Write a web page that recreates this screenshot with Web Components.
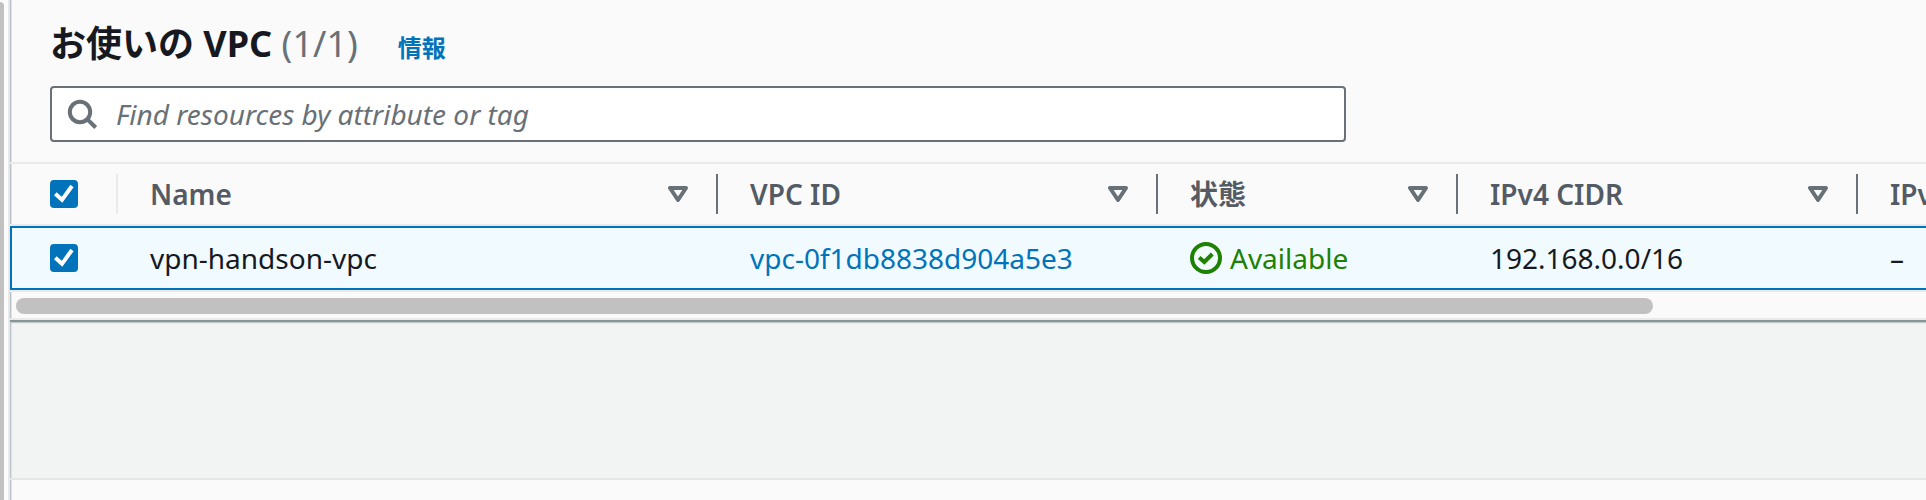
<!DOCTYPE html>
<html lang="ja">
<head>
<meta charset="utf-8">
<title>お使いの VPC</title>
<style>
  :root {
    --color-text: #16191f;
    --color-header: #545b64;
    --color-muted: #687078;
    --color-link: #0073bb;
    --color-success: #1d8102;
    --color-surface: #fafafa;
    --color-canvas: #f2f3f3;
    --color-hairline: #eaeaea;
    --color-selected: #f1faff;
    --color-thumb: #c1c1c1;
    --edge-shadow: linear-gradient(to right, #b8c2c8 1px, #dfe4e7 1px 2px, transparent 2px);
  }
  body {
    margin: 0;
    background: var(--color-canvas);
    color: var(--color-text);
    font-family: "Noto Sans", "Noto Sans CJK JP", sans-serif;
    font-size: 28px;
    line-height: 40px;
  }
</style>
</head>
<body>
<console-layout>
  <resource-panel>
    <panel-title slot="title" counter="(1/1)">お使いの VPC</panel-title>
    <search-field slot="filter" placeholder="Find resources by attribute or tag"></search-field>
    <vpc-table></vpc-table>
  </resource-panel>
  <split-panel slot="bottom"></split-panel>
</console-layout>

<script>
// <console-layout>: side navigation edge, main content and the bottom panel.
class ConsoleLayout extends HTMLElement {
  constructor() {
    super();
    this.attachShadow({ mode: "open" }).innerHTML = `
      <style>
        :host {
          display: grid;
          grid-template-columns: 10px minmax(0, 1fr);
          height: 100vh;
          overflow: hidden;
        }
        .nav {
          background: #fcfcfc;
          border-right: 2px solid var(--color-hairline);
          padding-top: 2px;
          box-sizing: border-box;
        }
        .nav-thumb {
          width: 4px;
          height: 100%;
          border-radius: 0 4px 0 0;
          background: var(--color-thumb);
        }
        main {
          display: flex;
          flex-direction: column;
          min-width: 0;
          background: var(--edge-shadow);
        }
        .spacer {
          flex: 1;
        }
      </style>
      <div class="nav"><div class="nav-thumb"></div></div>
      <main>
        <slot></slot>
        <div class="spacer"></div>
        <slot name="bottom"></slot>
      </main>
    `;
  }
}

class ResourcePanel extends HTMLElement {
  constructor() {
    super();
    this.attachShadow({ mode: "open" }).innerHTML = `
      <style>
        :host {
          display: block;
          background: var(--edge-shadow), var(--color-surface);
          border-bottom: 2px solid #879596;
          box-shadow: 0 1px 1px #c3cacb;
        }
        header {
          display: flex;
          flex-direction: column;
          gap: 18px;
          padding: 20px 40px;
          border-bottom: 2px solid var(--color-hairline);
        }
        .body {
          overflow: hidden;
        }
        .scrollbar {
          padding: 6px 6px 4px;
          border-bottom: 2px solid var(--color-hairline);
        }
        .thumb {
          width: 86%;
          height: 16px;
          border-radius: 8px;
          background: var(--color-thumb);
        }
      </style>
      <header>
        <slot name="title"></slot>
        <slot name="filter"></slot>
      </header>
      <div class="body"><slot></slot></div>
      <div class="scrollbar"><div class="thumb"></div></div>
    `;
  }
}

class PanelTitle extends HTMLElement {
  connectedCallback() {
    this.attachShadow({ mode: "open" }).innerHTML = `
      <style>
        :host {
          display: flex;
          align-items: baseline;
          gap: 40px;
        }
        h2 {
          margin: 0;
          font-size: 36px;
          line-height: 48px;
          font-weight: 700;
        }
        .counter {
          font-weight: 400;
          color: var(--color-muted);
        }
        a {
          font-size: 24px;
          line-height: 32px;
          font-weight: 700;
          color: var(--color-link);
          text-decoration: none;
        }
      </style>
      <h2><slot></slot> <span class="counter">${this.getAttribute("counter")}</span></h2>
      <a href="#info">情報</a>
    `;
  }
}

class SearchField extends HTMLElement {
  connectedCallback() {
    const placeholder = this.getAttribute("placeholder");
    this.attachShadow({ mode: "open" }).innerHTML = `
      <style>
        :host {
          display: block;
          max-width: 1296px;
        }
        label {
          display: flex;
          align-items: center;
          gap: 18px;
          padding: 6px 14px;
          background: #fff;
          border: 2px solid var(--color-muted);
          border-radius: 4px;
        }
        svg {
          flex: none;
          width: 32px;
          height: 32px;
          fill: none;
          stroke: var(--color-muted);
          stroke-width: 4;
        }
        input {
          flex: 1;
          min-width: 0;
          height: 40px;
          padding: 0;
          border: 0;
          outline: 0;
          background: none;
          color: inherit;
          font: inherit;
        }
        input::placeholder {
          color: var(--color-muted);
          font-style: italic;
        }
      </style>
      <label>
        <svg viewBox="0 0 32 32" aria-hidden="true">
          <circle cx="14" cy="14" r="10.200"/>
          <path d="M21 21l8.700 8.500"/>
        </svg>
        <input type="text" placeholder="${placeholder}" aria-label="${placeholder}">
      </label>
    `;
  }
}

// <check-box label="...">: tick box with the console's blue style.
class CheckBox extends HTMLElement {
  connectedCallback() {
    this.attachShadow({ mode: "open" }).innerHTML = `
      <style>
        :host {
          display: block;
          height: 28px;
        }
        label {
          display: grid;
          width: 28px;
          height: 28px;
        }
        input, svg {
          grid-area: 1 / 1;
          width: 28px;
          height: 28px;
          margin: 0;
        }
        input {
          appearance: none;
          box-sizing: border-box;
          border: 2px solid var(--color-muted);
          border-radius: 4px;
          background: #fff;
        }
        input:checked {
          border-color: var(--color-link);
          background: var(--color-link);
        }
        svg {
          fill: none;
          stroke: #fff;
          stroke-width: 4;
          pointer-events: none;
        }
        input:not(:checked) + svg {
          display: none;
        }
      </style>
      <label>
        <input type="checkbox" aria-label="${this.getAttribute("label")}" checked>
        <svg viewBox="0 0 28 28" aria-hidden="true"><path d="M5.300 13.800L12 19.800 22 6"/></svg>
      </label>
    `;
  }
}

class StatusIndicator extends HTMLElement {
  constructor() {
    super();
    this.attachShadow({ mode: "open" }).innerHTML = `
      <style>
        :host {
          display: flex;
          align-items: center;
          gap: 8px;
          color: var(--color-success);
        }
        svg {
          flex: none;
          width: 32px;
          height: 32px;
          fill: none;
          stroke: currentColor;
          stroke-width: 4;
        }
      </style>
      <svg viewBox="0 0 32 32" aria-hidden="true">
        <circle cx="16" cy="16" r="14"/>
        <path d="M9.200 15.500L14.300 20 22.300 12"/>
      </svg>
      <span><slot></slot></span>
    `;
  }
}

// <column-header>: heading text with the sort button at its right.
class ColumnHeader extends HTMLElement {
  connectedCallback() {
    this.attachShadow({ mode: "open" }).innerHTML = `
      <style>
        :host {
          display: flex;
          align-items: center;
          justify-content: space-between;
          height: 40px;
          padding: 0 28px 0 32px;
          border-right: 2px solid var(--color-muted);
          white-space: nowrap;
        }
        button {
          display: block;
          padding: 0;
          border: 0;
          background: none;
          cursor: pointer;
        }
        svg {
          display: block;
          width: 20px;
          height: 16px;
          fill: none;
          stroke: var(--color-muted);
          stroke-width: 4;
          stroke-linejoin: round;
        }
      </style>
      <span><slot></slot></span>
      <button aria-label="${this.textContent}">
        <svg viewBox="0 0 20 16" aria-hidden="true"><path d="M2 2H18L10 14Z"/></svg>
      </button>
    `;
  }
}

class VpcTable extends HTMLElement {
  constructor() {
    super();
    this._columns = [
      { label: "Name", width: 600 },
      { label: "VPC ID", width: 440 },
      { label: "状態", width: 300 },
      { label: "IPv4 CIDR", width: 400 },
      { label: "IPv6 CIDR", width: 368 },
    ];
    this._rows = [
      { name: "vpn-handson-vpc", id: "vpc-0f1db8838d904a5e3", state: "Available", ipv4: "192.168.0.0/16", ipv6: "–" },
    ];
    this.attachShadow({ mode: "open" });
    this._render();
  }

  _render() {
    const cols = this._columns.map((c) => `<col style="width: ${c.width}px">`).join("");
    const heads = this._columns
      .map((c) => `<th scope="col"><column-header>${c.label}</column-header></th>`)
      .join("");
    const rows = this._rows
      .map(
        (r) => `
          <tr>
            <td class="select"><check-box label="${r.name}"></check-box></td>
            <td>${r.name}</td>
            <td><a href="#${r.id}">${r.id}</a></td>
            <td><status-indicator>${r.state}</status-indicator></td>
            <td>${r.ipv4}</td>
            <td>${r.ipv6}</td>
          </tr>`,
      )
      .join("");
    this.shadowRoot.innerHTML = `
      <style>
        :host {
          display: block;
          border-bottom: 2px solid var(--color-hairline);
        }
        table {
          table-layout: fixed;
          width: 2216px;
          border-collapse: separate;
          border-spacing: 0;
        }
        .select-col {
          width: 108px;
        }
        th {
          padding: 10px 0;
          border-bottom: 2px solid var(--color-hairline);
          color: var(--color-header);
          font-weight: 600;
          text-align: left;
        }
        .select-all {
          display: flex;
          align-items: center;
          height: 40px;
          padding-left: 40px;
          border-right: 2px solid var(--color-hairline);
        }
        td {
          height: 60px;
          padding: 0 0 0 32px;
          background: var(--color-selected);
          border: 0 solid var(--color-link);
          border-width: 2px 0;
          white-space: nowrap;
        }
        td.select {
          padding-left: 38px;
          border-left-width: 2px;
        }
        a {
          color: var(--color-link);
          text-decoration: none;
        }
      </style>
      <table>
        <colgroup><col class="select-col">${cols}</colgroup>
        <thead>
          <tr>
            <th scope="col"><div class="select-all"><check-box label="VPC"></check-box></div></th>
            ${heads}
          </tr>
        </thead>
        <tbody>${rows}</tbody>
      </table>
    `;
  }
}

class SplitPanel extends HTMLElement {
  constructor() {
    super();
    this.attachShadow({ mode: "open" }).innerHTML = `
      <style>
        :host {
          display: block;
          height: 20px;
          background: var(--edge-shadow), var(--color-surface);
          border-top: 2px solid #e6e6e6;
        }
      </style>
      <slot></slot>
    `;
  }
}

customElements.define("console-layout", ConsoleLayout);
customElements.define("resource-panel", ResourcePanel);
customElements.define("panel-title", PanelTitle);
customElements.define("search-field", SearchField);
customElements.define("check-box", CheckBox);
customElements.define("status-indicator", StatusIndicator);
customElements.define("column-header", ColumnHeader);
customElements.define("vpc-table", VpcTable);
customElements.define("split-panel", SplitPanel);
</script>
</body>
</html>
